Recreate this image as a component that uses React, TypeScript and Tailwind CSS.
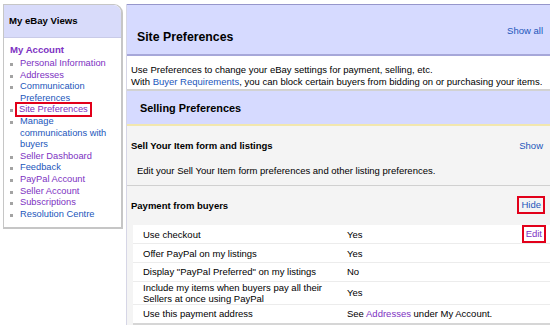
import React from 'react';

const blue = 'text-[#2256bb]';
const purple = 'text-[#7d31c2]';

const menu: { label: string[]; visited: boolean; boxed?: boolean }[] = [
  { label: ['Personal Information'], visited: true },
  { label: ['Addresses'], visited: true },
  { label: ['Communication', 'Preferences'], visited: false },
  { label: ['Site Preferences'], visited: true, boxed: true },
  { label: ['Manage', 'communications with', 'buyers'], visited: false },
  { label: ['Seller Dashboard'], visited: true },
  { label: ['Feedback'], visited: false },
  { label: ['PayPal Account'], visited: true },
  { label: ['Seller Account'], visited: true },
  { label: ['Subscriptions'], visited: true },
  { label: ['Resolution Centre'], visited: false },
];

const rows: { name: React.ReactNode; value: React.ReactNode; edit?: boolean }[] = [
  { name: 'Use checkout', value: 'Yes', edit: true },
  { name: 'Offer PayPal on my listings', value: 'Yes' },
  { name: 'Display "PayPal Preferred" on my listings', value: 'No' },
  {
    name: (
      <>
        Include my items when buyers pay all their
        <br />
        Sellers at once using PayPal
      </>
    ),
    value: 'Yes',
  },
  {
    name: 'Use this payment address',
    value: (
      <>
        See <span className={purple}>Addresses</span> under My Account.
      </>
    ),
  },
];

function Sidebar() {
  return (
    <aside className="ml-[3px] w-[120px] h-[225px] shrink-0 border border-r-2 border-b-2 border-[#c6c6c6] rounded-tr-[9px] bg-white">
      {/* Header */}
      <div className="h-[33px] bg-[#d8dbfa] rounded-tr-[8px] border-b border-[#c9cbe8] px-[5px] flex items-center">
        <span className="text-[9.6px] font-bold">My eBay Views</span>
      </div>

      <div className="pt-[6px] px-[6px] text-[9.3px] leading-[11.6px]">
        <div className={`font-bold text-[9.6px] leading-[12px] ${purple}`}>My Account</div>
        <ul className="mt-[2px]">
          {menu.map((item) => (
            <li key={item.label.join(' ')} className="flex items-start">
              <span className="w-[3px] h-[3px] mt-[5px] bg-[#a3a3a3] shrink-0" />
              <span className={`ml-[7px] ${item.visited ? purple : blue}`}>
                {item.boxed ? (
                  <span className="inline-block -ml-[3px] px-[2px] leading-[11px] outline-2 outline-[#e2001a]">
                    {item.label[0]}
                  </span>
                ) : (
                  item.label.map((l) => (
                    <span key={l} className="block">
                      {l}
                    </span>
                  ))
                )}
              </span>
            </li>
          ))}
        </ul>
      </div>
    </aside>
  );
}

export default function App() {
  return (
    <div className="w-[550px] h-[326px] overflow-hidden bg-white flex items-start pt-[4px] text-black font-['Liberation_Sans',Arial,sans-serif]">
      <Sidebar />

      {/* Main panel */}
      <main className="ml-[3px] flex-1 border-l border-[#d6d6e6] bg-[#f4f4f4] text-[9.5px] leading-[11.6px]">
        {/* Site Preferences header */}
        <div className="h-[52px] bg-[#d6daff] border-t border-[#9696cb] border-b-2 border-b-[#a6a7d9] pl-[10px] pr-[7px] flex justify-between items-start">
          <h1 className="pt-[25px] text-[12.3px] leading-[15px] font-bold">Site Preferences</h1>
          <span className={`pt-[20px] ${blue}`}>Show all</span>
        </div>

        {/* Description */}
        <div className="bg-white pt-[8px] pb-[2px] pl-[4px] border-b-2 border-[#d2d2d2]">
          <p>Use Preferences to change your eBay settings for payment, selling, etc.</p>
          <p>
            With <span className={blue}>Buyer Requirements</span>, you can block certain buyers from bidding on or purchasing your items.
          </p>
        </div>

        {/* Selling Preferences */}
        <div className="h-[35px] bg-[#d6daff] border-b-2 border-[#f2e7ae] pl-[13px] pt-[2px] flex items-center">
          <h2 className="text-[10.9px] font-bold">Selling Preferences</h2>
        </div>

        {/* Sell Your Item */}
        <div className="pt-[14px] pb-[1px] pl-[4px] pr-[7px]">
          <div className="flex justify-between">
            <span className="font-bold text-[9.5px]">Sell Your Item form and listings</span>
            <span className={blue}>Show</span>
          </div>
          <p className="mt-[13px] pl-[6px]">Edit your Sell Your Item form preferences and other listing preferences.</p>
        </div>

        {/* Payment from buyers */}
        <div className="mt-[8px] bg-white">
          <div className="border-t border-[#d0d0d0] bg-[#f4f4f4] pt-[10px] pl-[4px] pr-[5px]">
            <div className="h-[18px] flex justify-between items-center">
              <span className="font-bold text-[9.5px]">Payment from buyers</span>
              <span className={`border-2 border-[#e2001a] px-[2px] leading-[12px] py-[1px] ${blue}`}>Hide</span>
            </div>

            <div className="mt-[11px] ml-[2px] -mr-[5px] bg-white border-b-2 border-[#d6d6d6]">
              {rows.map((r, i) => (
                <div
                  key={i}
                  className={`min-h-[18.6px] flex items-center leading-[11px] ${i < rows.length - 1 ? 'border-b border-[#ececec]' : ''}`}
                >
                  <div className="w-[211px] pl-[10px] shrink-0">{r.name}</div>
                  <div className="flex-1 pl-[3px]">{r.value}</div>
                  {r.edit && (
                    <span className={`mr-[4px] border-2 border-[#e2001a] px-[2px] leading-[12px] py-[1px] ${purple}`}>Edit</span>
                  )}
                </div>
              ))}
            </div>
          </div>
        </div>
      </main>
    </div>
  );
}
